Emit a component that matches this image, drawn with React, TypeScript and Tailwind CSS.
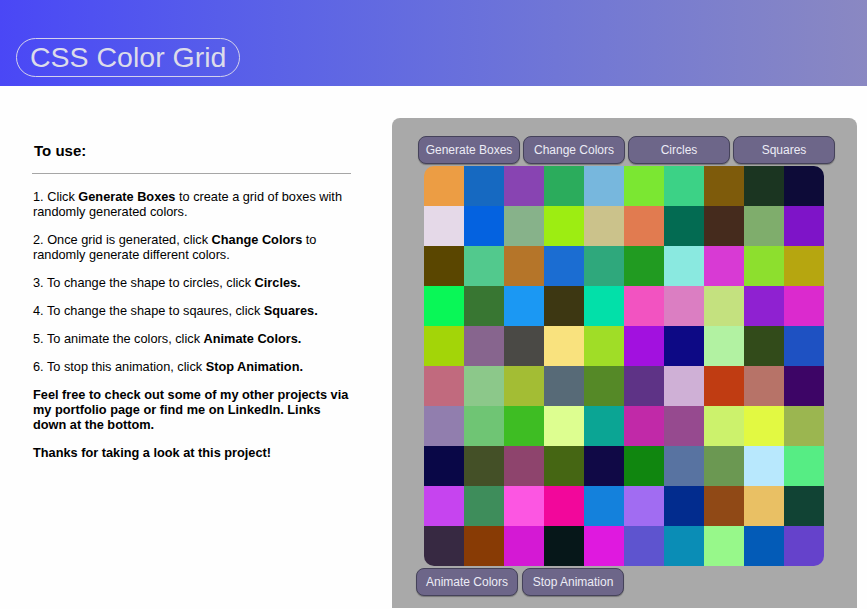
const colors: string[][] = [
  ["#ec9d44", "#1669c1", "#8844b2", "#2bac5c", "#77b7dd", "#7be732", "#3cd286", "#7e5b0b", "#1b3521", "#0d0b38"],
  ["#e5d9e8", "#0462e0", "#87b28a", "#9ded12", "#cbc28b", "#e17b50", "#036b52", "#452b1d", "#7fad6c", "#7e14c8"],
  ["#5a4600", "#52c98d", "#b57529", "#1b6dd2", "#2fa87c", "#219b21", "#8ae9e0", "#d83ad4", "#8ddf2e", "#b6a610"],
  ["#09f757", "#387632", "#1b98f3", "#3d3712", "#02e0a9", "#f253c1", "#db7ec2", "#c4e17f", "#8f21d1", "#db2ace"],
  ["#a3d508", "#87658e", "#4a4945", "#f9e27e", "#a0dd27", "#a211df", "#0d0985", "#b2f2a2", "#324b1a", "#1e51c2"],
  ["#c16a7e", "#8cc88a", "#a3bd34", "#576a77", "#558927", "#5e3386", "#cfb0d6", "#c03c12", "#b77368", "#3d0566"],
  ["#917eae", "#6fc574", "#3ebd23", "#ddfe90", "#0ba594", "#c129a8", "#964a8f", "#ccf26c", "#e2f942", "#9bb650"],
  ["#090747", "#445027", "#8e446d", "#456613", "#100946", "#10860f", "#5873a1", "#6b9852", "#b8e8fd", "#56ed84"],
  ["#c644ef", "#3e8d5b", "#fc56e2", "#f2079b", "#1481dc", "#a16cf2", "#022c8e", "#904916", "#e9c064", "#114334"],
  ["#372942", "#883b05", "#d419d4", "#061719", "#df19df", "#5e54cf", "#0a8db6", "#97f88a", "#035bb7", "#6542cb"],
];

const Btn = ({ label }: { label: string }) => (
  <button className="w-[102px] h-[28px] rounded-[8px] bg-[#6d6689] border border-[#45425a] text-[12px] text-[#ececf6] shadow-[0_1px_1px_rgba(0,0,0,0.3)]">
    {label}
  </button>
);

const App = () => {
  return (
    <div className="min-h-[609px] bg-[#fefefe] font-['Liberation_Sans',Arial,sans-serif] text-black">
      {/* cabeçalho */}
      <header className="h-[86px] bg-gradient-to-r from-[#4a47f6] to-[#8a88c2] flex items-end pb-[9px] pl-[16px]">
        <h1 className="h-[39px] px-[13px] flex items-center rounded-full border border-[#d4d2ec] text-[28.5px] text-[#dcdcea] leading-none">
          CSS Color Grid
        </h1>
      </header>

      <div className="flex">
        {/* instruções */}
        <div className="ml-[32px] w-[319px] pt-[56px] text-[12.75px] leading-[15px]">
          <h2 className="ml-[2px] text-[15px] font-bold leading-[17px]">To use:</h2>
          <hr className="mt-[14px] mb-[15px] border-t border-[#a6a6a6]" />
          <div className="pl-[1px] w-[322px] flex flex-col gap-[13px]">
            <p>
              1. Click <b>Generate Boxes</b> to create a grid of boxes with randomly generated colors.
            </p>
            <p>
              2. Once grid is generated, click <b>Change Colors</b> to randomly generate different colors.
            </p>
            <p>
              3. To change the shape to circles, click <b>Circles.</b>
            </p>
            <p>
              4. To change the shape to sqaures, click <b>Squares.</b>
            </p>
            <p>
              5. To animate the colors, click <b>Animate Colors.</b>
            </p>
            <p>
              6. To stop this animation, click <b>Stop Animation.</b>
            </p>
            <p className="font-bold">
              Feel free to check out some of my other projects via my portfolio page or find me on LinkedIn. Links down at the bottom.
            </p>
            <p className="font-bold">Thanks for taking a look at this project!</p>
          </div>
        </div>

        {/* painel da grade */}
        <div className="ml-[41px] mt-[32px] w-[465px] h-[490px] bg-[#a9a9a9] rounded-t-[8px] pt-[18px]">
          <div className="ml-[26px] flex gap-[3px]">
            <Btn label="Generate Boxes" />
            <Btn label="Change Colors" />
            <Btn label="Circles" />
            <Btn label="Squares" />
          </div>
          <div className="ml-[32px] mt-[2px] w-[400px] rounded-[10px] overflow-hidden grid grid-cols-10">
            {colors.flat().map((c, i) => (
              <div key={i} className="w-[40px] h-[40px]" style={{ backgroundColor: c }} />
            ))}
          </div>
          <div className="ml-[24px] mt-[2px] flex gap-[4px]">
            <Btn label="Animate Colors" />
            <Btn label="Stop Animation" />
          </div>
        </div>
      </div>
    </div>
  );
};

export default App;
